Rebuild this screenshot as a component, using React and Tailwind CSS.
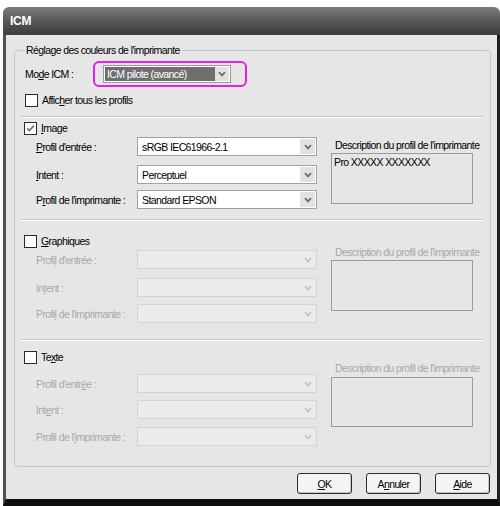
import React from 'react';

const txt = "font-['Liberation_Sans',Arial,sans-serif] text-[10.5px] tracking-[-0.6px] leading-[14px]";

function Chevron({ dim }) {
  return (
    <svg width="8" height="6" viewBox="0 0 8 6">
      <path d="M1 1.2 L4 4.4 L7 1.2" fill="none" stroke={dim ? '#c4c4c4' : '#6e6e6e'} strokeWidth="1.7" />
    </svg>
  );
}

function Check({ checked }) {
  return (
    <span className="w-[13px] h-[13px] border border-[#2a2a2a] bg-white flex items-center justify-center shrink-0">
      {checked && (
        <svg width="9" height="9" viewBox="0 0 9 9">
          <path d="M1.2 4.3 L3.4 6.6 L7.8 1.6" fill="none" stroke="#707070" strokeWidth="1.7" />
        </svg>
      )}
    </span>
  );
}

function Select({ value, disabled }) {
  return (
    <div className={`w-[180px] h-[19px] flex border ${disabled ? 'border-[#d4d4d4] bg-[#ebebeb]' : 'border-[#a2a2a2] bg-white'}`}>
      <div className="flex-1 pl-[4px] flex items-center text-black">{value}</div>
      <div className={`w-[15px] m-[1px] flex items-center justify-center ${disabled ? 'bg-[#ebebeb]' : 'bg-[#e2e2e2]'}`}>
        <Chevron dim={disabled} />
      </div>
    </div>
  );
}

function Row({ label, value, disabled, className = '' }) {
  return (
    <div className={`flex items-center h-[19px] ${className}`}>
      <div className={`w-[101px] ${disabled ? 'text-[#a9a9a9]' : 'text-black'}`}>{label}</div>
      <Select value={value} disabled={disabled} />
    </div>
  );
}

function Desc({ text, disabled, labelTop, boxTop, boxH }) {
  return (
    <div className="w-[142px] ml-[14px]">
      <div className={`${labelTop} pl-[4px] whitespace-nowrap ${disabled ? 'text-[#a9a9a9]' : 'text-black'}`}>
        Description du profil de l'imprimante
      </div>
      <div className={`${boxTop} ${boxH} border border-[#9a9a9a] pl-[2px] pt-[1px] text-black`}>{text}</div>
    </div>
  );
}

function Sep({ className = '' }) {
  return <div className={`h-[2px] border-t border-[#c6c6c6] border-b border-b-white ${className}`} />;
}

export default function App() {
  return (
    <div className={`w-[500px] h-[506px] bg-white pt-[7px] pl-[3px] ${txt}`}>
      <div className="w-[497px] h-[499px] flex flex-col">
        <div className="h-[28px] rounded-t-[6px] bg-gradient-to-b from-[#7c7c7c] via-[#575757] to-[#3d3d3d] flex items-center pl-[7px]">
          <span className="text-white font-bold text-[12px] tracking-[-0.3px]">ICM</span>
        </div>
        <div className="flex-1 bg-[#e6e6e6] border-l-[3px] border-l-[#505050] border-r-[3px] border-r-[#1c1c1c] border-b-[7px] border-b-[#0e0e0e] flex flex-col">
          <fieldset className="ml-[8px] mt-[8px] w-[477px] border border-[#c9c9c9] rounded-[4px] pl-[5px] pr-[7px] pb-[20px]">
            <legend className="ml-[5px] px-[1px] leading-[14px] text-black">Réglage des couleurs de l'imprimante</legend>

            <div className="mt-[4px] flex items-center h-[26px] pl-[5px]">
              <div className="w-[68px] text-black">Mo<u>d</u>e ICM :</div>
              <div className="w-[154px] h-[26px] border-2 border-[#e81ee8] rounded-[6px] flex items-center pl-[8px]">
                <div className="w-[128px] h-[18px] border border-[#9a9a9a] bg-white flex p-[1px]">
                  <div className="flex-1 bg-[#6f6f6f] text-white pl-[2px] flex items-center">ICM pilote (avancé)</div>
                  <div className="w-[14px] bg-[#e2e2e2] flex items-center justify-center"><Chevron /></div>
                </div>
              </div>
            </div>

            <div className="mt-[6px] flex items-center gap-[4px] pl-[5px] text-black">
              <Check />
              <span>Affic<u>h</u>er tous les profils</span>
            </div>

            <Sep className="mt-[9px]" />

            {/* Image */}
            <div className="flex pl-[4px]">
              <div>
                <div className="mt-[3px] flex items-center gap-[4px] text-black h-[14px]">
                  <Check checked />
                  <span><u>I</u>mage</span>
                </div>
                <div className="pl-[12px]">
                  <Row className="mt-[2px]" label={<span><u>P</u>rofil d'entrée :</span>} value="sRGB IEC61966-2.1" />
                  <Row className="mt-[9px]" label={<span><u>I</u>ntent :</span>} value="Perceptuel" />
                  <Row className="mt-[6px]" label={<span>P<u>r</u>ofil de l'imprimante :</span>} value="Standard EPSON" />
                </div>
              </div>
              <Desc text="Pro XXXXX XXXXXXX" labelTop="mt-[20px]" boxTop="mt-[1px]" boxH="h-[51px]" />
            </div>

            <Sep className="mt-[10px]" />

            {/* Graphiques */}
            <div className="flex pl-[4px]">
              <div>
                <div className="mt-[13px] flex items-center gap-[4px] text-black h-[14px]">
                  <Check />
                  <span><u>G</u>raphiques</span>
                </div>
                <div className="pl-[12px]">
                  <Row disabled className="mt-[2px]" label={<span>Profi<u>l</u> d'entrée :</span>} value="" />
                  <Row disabled className="mt-[9px]" label={<span>In<u>t</u>ent :</span>} value="" />
                  <Row disabled className="mt-[7px]" label={<span>Profi<u>l</u> de l'imprimante :</span>} value="" />
                </div>
              </div>
              <Desc disabled text="" labelTop="mt-[24px]" boxTop="mt-[1px]" boxH="h-[51px]" />
            </div>

            <Sep className="mt-[16px]" />

            {/* Texte */}
            <div className="flex pl-[4px]">
              <div>
                <div className="mt-[9px] flex items-center gap-[4px] text-black h-[14px]">
                  <Check />
                  <span>Te<u>x</u>te</span>
                </div>
                <div className="pl-[12px]">
                  <Row disabled className="mt-[10px]" label={<span>Profil d'entr<u>é</u>e :</span>} value="" />
                  <Row disabled className="mt-[7px]" label={<span>Int<u>e</u>nt :</span>} value="" />
                  <Row disabled className="mt-[8px]" label={<span>Profil de l'<u>i</u>mprimante :</span>} value="" />
                </div>
              </div>
              <Desc disabled text="" labelTop="mt-[20px]" boxTop="mt-[2px]" boxH="h-[50px]" />
            </div>
          </fieldset>

          <div className="mt-[6px] flex justify-end gap-[14px] pr-[7px] text-black">
            <button className="w-[55px] h-[21px] bg-[#f4f4f4] border border-[#2c2c2c] rounded-[3px] shadow-[inset_-1px_-1px_0_#c4c4c4]"><u>O</u>K</button>
            <button className="w-[55px] h-[21px] bg-[#f4f4f4] border border-[#2c2c2c] rounded-[3px] shadow-[inset_-1px_-1px_0_#c4c4c4]">A<u>n</u>nuler</button>
            <button className="w-[55px] h-[21px] bg-[#f4f4f4] border border-[#2c2c2c] rounded-[3px] shadow-[inset_-1px_-1px_0_#c4c4c4]"><u>A</u>ide</button>
          </div>
        </div>
      </div>
    </div>
  );
}
